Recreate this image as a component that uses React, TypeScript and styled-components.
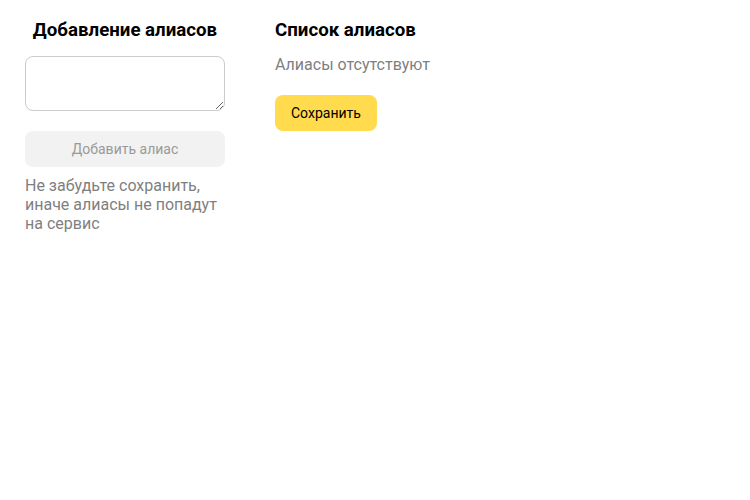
import React from "react";
import styled, { createGlobalStyle } from "styled-components";

const Global = createGlobalStyle`
  html, body { margin: 0; padding: 0; background: #fff; }
  body { font-family: "Roboto", "Noto Sans", sans-serif; color: #000; }
`;

const Page = styled.div`
  display: flex;
  gap: 50px;
  padding: 18px 25px;
`;

const Column = styled.div<{ $width?: number }>`
  display: flex;
  flex-direction: column;
  width: ${(p) => (p.$width ? `${p.$width}px` : "auto")};
`;

const Title = styled.h2<{ $center?: boolean }>`
  margin: 0;
  font-size: 18.7px;
  line-height: 24px;
  font-weight: 700;
  text-align: ${(p) => (p.$center ? "center" : "left")};
`;

const TextArea = styled.textarea`
  margin-top: 14px;
  box-sizing: border-box;
  width: 200px;
  height: 55px;
  border: 1px solid #ccc;
  border-radius: 8px;
  font-family: inherit;
  font-size: 15px;
  padding: 6px 10px;
  outline: none;
`;

const Button = styled.button<{ $primary?: boolean }>`
  box-sizing: border-box;
  height: 36px;
  border: none;
  border-radius: 8px;
  font-family: inherit;
  font-size: 14px;
  padding: 0 16px;
  background: ${(p) => (p.$primary ? "#ffdb4d" : "#f2f2f2")};
  color: ${(p) => (p.$primary ? "#000" : "#999")};
  cursor: pointer;
`;

const AddButton = styled(Button)`
  margin-top: 20px;
  width: 200px;
`;

const SaveButton = styled(Button)`
  margin-top: 21px;
  align-self: flex-start;
`;

const Muted = styled.p<{ $top: number }>`
  margin: ${(p) => p.$top}px 0 0;
  font-size: 16px;
  line-height: 19px;
  color: #7f7f7f;
`;

export default function App() {
  return (
    <>
      <Global />
      <Page>
        <Column $width={200}>
          <Title $center>Добавление алиасов</Title>
          <TextArea />
          <AddButton disabled>Добавить алиас</AddButton>
          <Muted $top={9}>
            Не забудьте сохранить, иначе алиасы не попадут на сервис
          </Muted>
        </Column>
        <Column>
          <Title>Список алиасов</Title>
          <Muted $top={13}>Алиасы отсутствуют</Muted>
          <SaveButton $primary>Сохранить</SaveButton>
        </Column>
      </Page>
    </>
  );
}
